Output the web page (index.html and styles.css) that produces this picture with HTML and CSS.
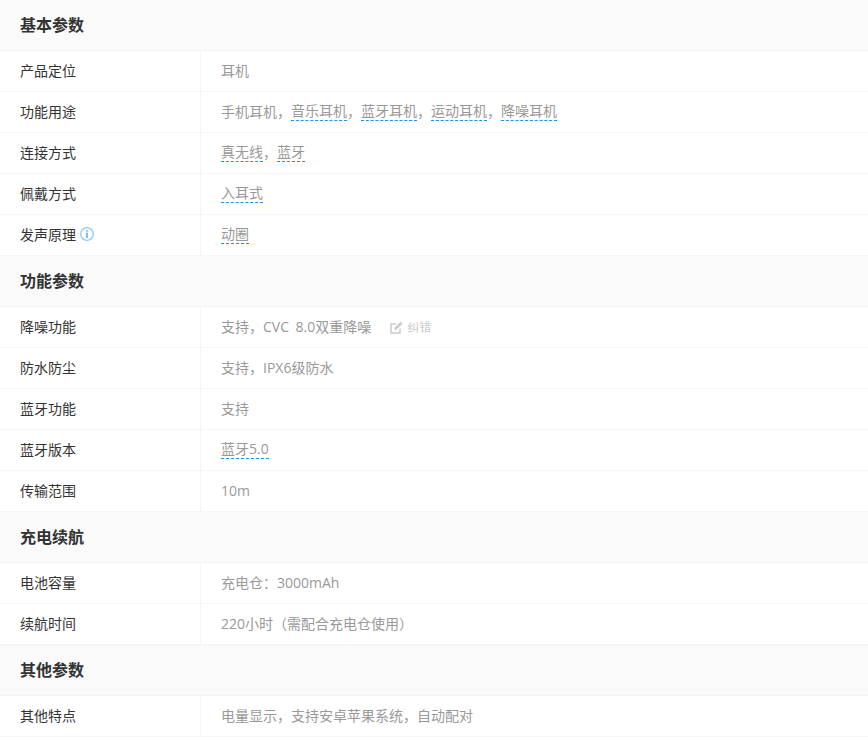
FILE: index.html
```html
<!DOCTYPE html>
<html lang="zh-CN">
<head>
<meta charset="utf-8">
<title>参数</title>
<link rel="stylesheet" href="styles.css">
</head>
<body>
<section class="group">
  <h2 class="group-title">基本参数</h2>
  <div class="row"><div class="label">产品定位</div><div class="value">耳机</div></div>
  <div class="row"><div class="label">功能用途</div><div class="value">手机耳机，<a class="term">音乐耳机</a>，<a class="term">蓝牙耳机</a>，<a class="term">运动耳机</a>，<a class="term">降噪耳机</a></div></div>
  <div class="row"><div class="label">连接方式</div><div class="value"><a class="term">真无线</a>，<a class="term">蓝牙</a></div></div>
  <div class="row"><div class="label">佩戴方式</div><div class="value"><a class="term">入耳式</a></div></div>
  <div class="row"><div class="label">发声原理<svg class="info" viewBox="0 0 14 14" width="14" height="14"><circle cx="7" cy="7" r="6.3" fill="none" stroke="#8cc8ff" stroke-width="1.3"/><rect x="6.2" y="3" width="1.6" height="1.6" fill="#5aaefc"/><rect x="6.2" y="5.6" width="1.6" height="5.4" fill="#5aaefc"/></svg></div><div class="value"><a class="term">动圈</a></div></div>
</section>
<section class="group">
  <h2 class="group-title">功能参数</h2>
  <div class="row"><div class="label">降噪功能</div><div class="value">支持，CVC 8.0双重降噪<span class="fix"><svg class="fix-icon" viewBox="0 0 13 13" width="13" height="13"><path d="M10 7.5V12H1V3h5" fill="none" stroke="#ccc" stroke-width="1.5"/><path d="M4.2 9l.5-2.6L10.6.6l2 2-5.8 5.9z" fill="#ccc"/></svg>纠错</span></div></div>
  <div class="row"><div class="label">防水防尘</div><div class="value">支持，IPX6级防水</div></div>
  <div class="row"><div class="label">蓝牙功能</div><div class="value">支持</div></div>
  <div class="row"><div class="label">蓝牙版本</div><div class="value"><a class="term">蓝牙5.0</a></div></div>
  <div class="row"><div class="label">传输范围</div><div class="value">10m</div></div>
</section>
<section class="group">
  <h2 class="group-title">充电续航</h2>
  <div class="row"><div class="label">电池容量</div><div class="value">充电仓：3000mAh</div></div>
  <div class="row"><div class="label">续航时间</div><div class="value">220小时（需配合充电仓使用）</div></div>
</section>
<section class="group">
  <h2 class="group-title">其他参数</h2>
  <div class="row"><div class="label">其他特点</div><div class="value">电量显示，支持安卓苹果系统，自动配对</div></div>
</section>
</body>
</html>
```
FILE: styles.css
```css
* { box-sizing: border-box; }
html, body { margin: 0; padding: 0; background: #fff; }
body {
  font-family: "Open Sans", "Noto Sans CJK SC", sans-serif;
  font-size: 14px;
  color: #333;
  overflow: hidden;
}
.group-title {
  margin: 0;
  height: 51px;
  padding: 0 20px 3px;
  display: flex;
  align-items: center;
  background: #fafafa;
  border-bottom: 1px solid #f5f5f5;
  font-size: 16px;
  font-weight: 700;
  color: #333;
}
.row {
  display: flex;
  height: 41px;
  border-bottom: 1px solid #f5f5f5;
}
.label {
  width: 201px;
  flex: none;
  padding: 0 0 2px 20px;
  border-right: 1px solid #f5f5f5;
  display: flex;
  align-items: center;
  gap: 4px;
  color: #333;
}
.value {
  flex: 1;
  padding: 0 0 2px 20px;
  display: flex;
  align-items: center;
  color: #999;
  white-space: pre;
  word-spacing: 3px;
}
.term {
  color: #999;
  border-bottom: 1px dashed #1890ff;
  line-height: 18px;
  margin-top: 1px;
}
.info { display: block; }
.fix {
  display: inline-flex;
  align-items: center;
  gap: 4px;
  margin: 2px 0 0 19px;
  font-size: 12px;
  color: #ccc;
}
.fix-icon { display: block; }
```
